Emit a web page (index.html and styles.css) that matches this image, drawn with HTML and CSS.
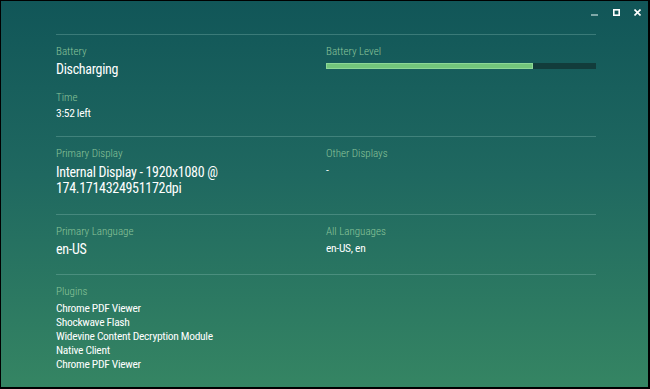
FILE: index.html
```html
<!DOCTYPE html>
<html lang="en">
<head>
    <meta charset="UTF-8">
    <title>System Info</title>
    <link rel="stylesheet" href="styles.css">
</head>
<body>
    <div class="ventana">
        <div class="barra-titulo">
            <svg class="ctrl minimizar" width="7" height="7" viewBox="0 0 7 7"><rect x="0" y="5" width="7" height="2" fill="#7fa8a8"/></svg>
            <svg class="ctrl" width="7" height="7" viewBox="0 0 7 7"><rect x="0.8" y="0.8" width="5.4" height="5.4" fill="none" stroke="#fff" stroke-width="1.6"/></svg>
            <svg class="ctrl" width="7" height="7" viewBox="0 0 7 7"><path d="M0.5 0.5 L6.5 6.5 M6.5 0.5 L0.5 6.5" stroke="#fff" stroke-width="1.6"/></svg>
        </div>
        <main class="contenido">
            <section class="fila bateria">
                <div class="col">
                    <p class="etiqueta">Battery</p>
                    <p class="valor">Discharging</p>
                    <p class="etiqueta espacio">Time</p>
                    <p class="valor-chico">3:52 left</p>
                </div>
                <div class="col">
                    <p class="etiqueta">Battery Level</p>
                    <div class="barra"><div class="relleno" style="width: 76.7%"></div></div>
                </div>
            </section>
            <section class="fila pantalla">
                <div class="col">
                    <p class="etiqueta">Primary Display</p>
                    <p class="valor">Internal Display - 1920x1080 @<br>174.1714324951172dpi</p>
                </div>
                <div class="col">
                    <p class="etiqueta">Other Displays</p>
                    <p class="valor-chico">-</p>
                </div>
            </section>
            <section class="fila">
                <div class="col">
                    <p class="etiqueta">Primary Language</p>
                    <p class="valor">en-US</p>
                </div>
                <div class="col">
                    <p class="etiqueta">All Languages</p>
                    <p class="valor-chico">en-US, en</p>
                </div>
            </section>
            <section class="fila ultima">
                <div class="col">
                    <p class="etiqueta">Plugins</p>
                    <ul class="plugins">
                        <li>Chrome PDF Viewer</li>
                        <li>Shockwave Flash</li>
                        <li>Widevine Content Decryption Module</li>
                        <li>Native Client</li>
                        <li>Chrome PDF Viewer</li>
                    </ul>
                </div>
            </section>
        </main>
    </div>
</body>
</html>
```

FILE: styles.css
```css
:root {
    --etiqueta: #8cc59a;
    --linea: rgba(160, 210, 200, 0.28);
}
html, body {
    margin: 0;
    padding: 0;
    height: 100%;
}
body {
    font-family: 'Roboto Condensed', 'Roboto', sans-serif;
    color: #ffffff;
    background: #000;
}
.ventana {
    box-sizing: border-box;
    height: 389px;
    border-top: 1px solid #000;
    border-left: 1px solid #000;
    border-right: 2px solid #000;
    border-bottom: 2px solid #000;
    background: linear-gradient(to bottom, #115658 0%, #1f6860 45%, #358563 100%);
}
.barra-titulo {
    display: flex;
    justify-content: flex-end;
    gap: 14px;
    padding: 8px 7px 0 0;
    height: 33px;
    box-sizing: border-box;
}
.ctrl {
    display: block;
}
.minimizar {
    margin-right: 1px;
}
.contenido {
    padding: 0 52px 0 55px;
}
.fila {
    display: grid;
    grid-template-columns: 270px 270px;
    border-top: 1px solid var(--linea);
    padding: 10px 0 17px;
}
.bateria {
    padding-bottom: 16px;
}
.bateria .valor-chico {
    margin-top: 1px;
}
.pantalla {
    padding-bottom: 18px;
}
.pantalla .valor {
    margin-top: 3px;
}
.ultima {
    padding-bottom: 0;
}
p {
    margin: 0;
}
.etiqueta {
    font-size: 11px;
    font-weight: 300;
    line-height: 14px;
    color: var(--etiqueta);
}
.espacio {
    margin-top: 14px;
}
.valor {
    font-size: 14px;
    line-height: 16px;
    letter-spacing: -0.3px;
    margin-top: 2px;
}
.valor-chico {
    font-size: 11.5px;
    line-height: 14px;
    letter-spacing: -0.3px;
    margin-top: 2px;
}
.barra {
    margin-top: 4px;
    height: 6px;
    background: #123c3b;
}
.relleno {
    height: 100%;
    background: #72c57b;
    box-shadow: inset 0 0 0 1px #8dd897;
}
.plugins {
    list-style: none;
    margin: 2px 0 0;
    padding: 0;
    font-size: 11.5px;
    line-height: 14px;
    letter-spacing: -0.3px;
}
```
